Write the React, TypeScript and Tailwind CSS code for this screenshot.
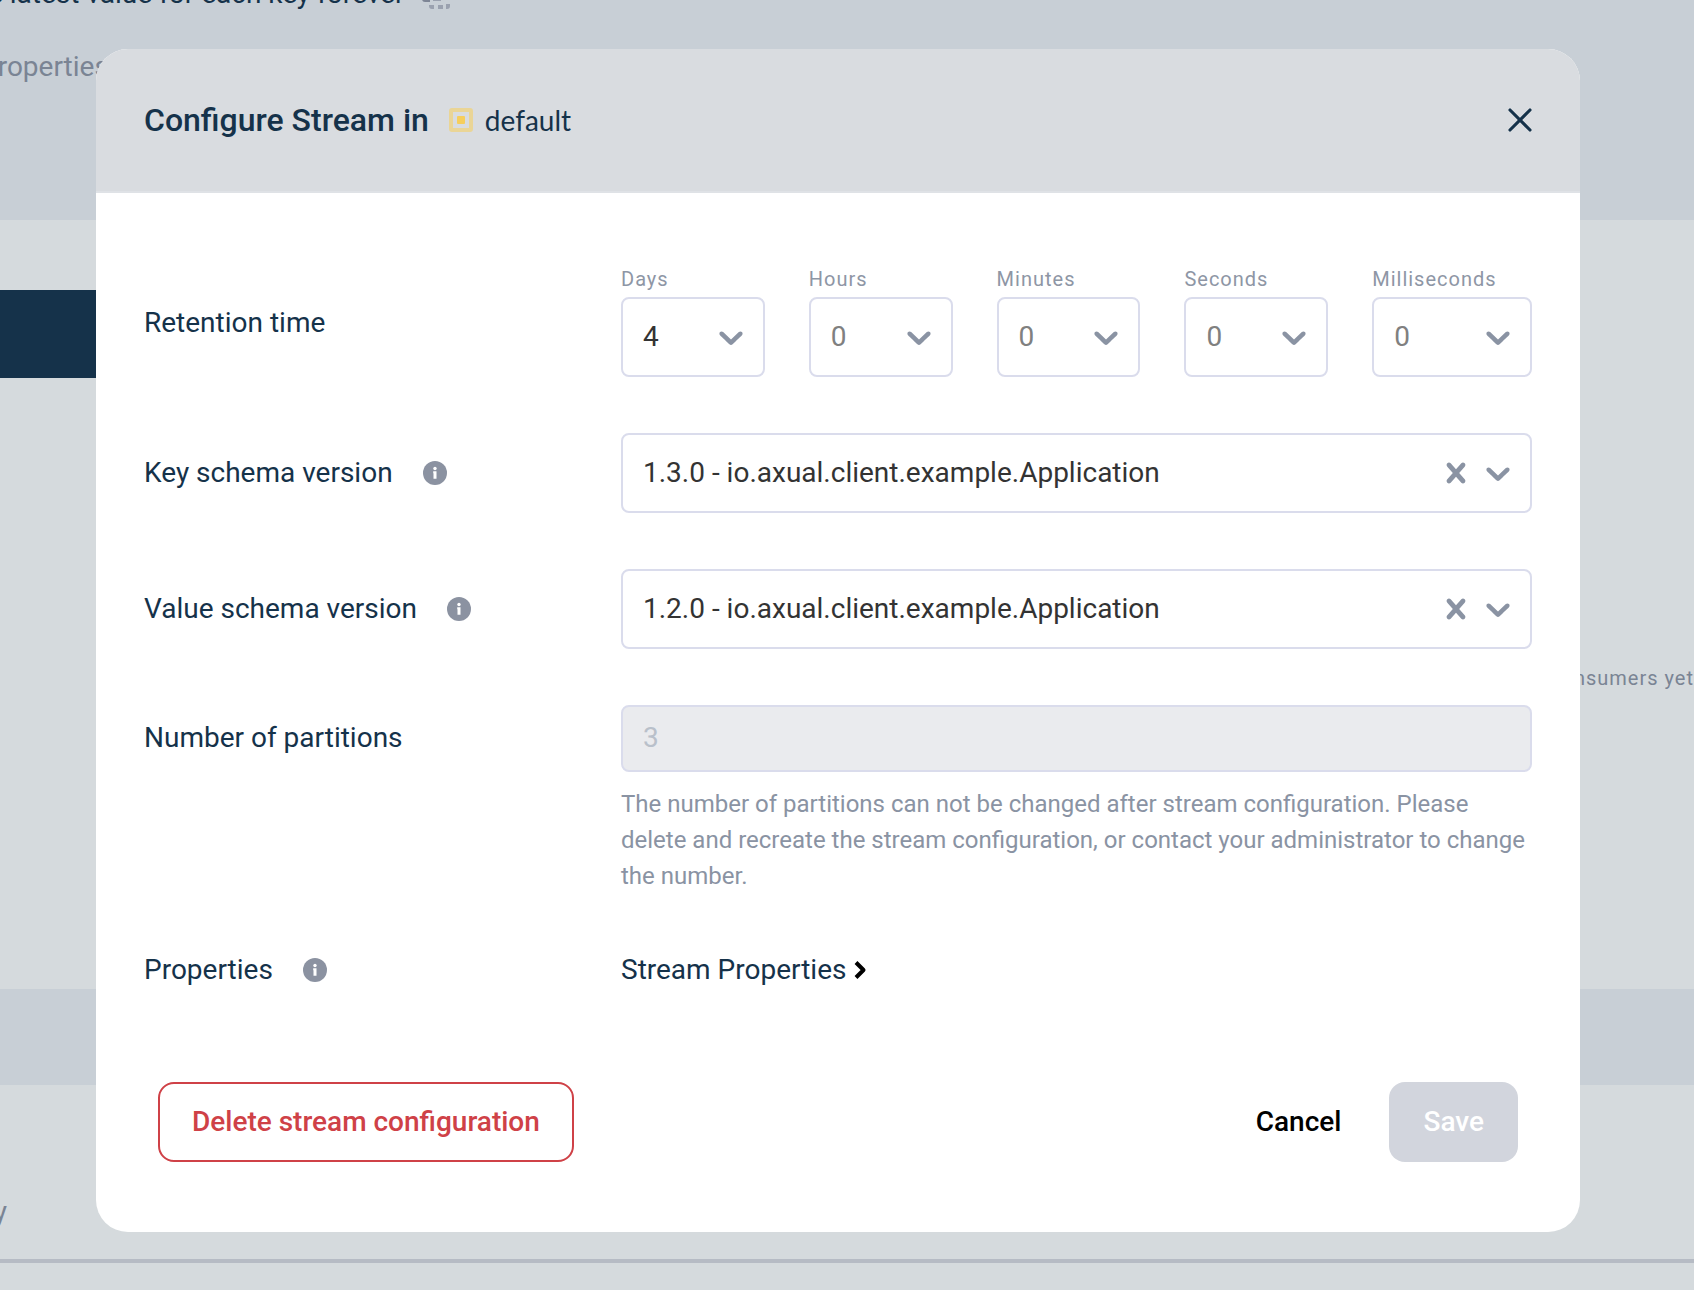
import React from 'react';
import { X } from 'lucide-react';

const CHEVRON =
    'M4.516 7.548c0.436-0.446 1.043-0.481 1.576 0l3.908 3.747 3.908-3.747c0.533-0.481 1.141-0.446 1.574 0 0.436 0.445 0.408 1.197 0 1.615-0.406 0.418-4.695 4.502-4.695 4.502-0.217 0.223-0.502 0.335-0.787 0.335s-0.57-0.112-0.789-0.335c0 0-4.287-4.084-4.695-4.502s-0.436-1.17 0-1.615z';
const CROSS =
    'M14.348 14.849c-0.469 0.469-1.229 0.469-1.697 0l-2.651-3.030-2.651 3.029c-0.469 0.469-1.229 0.469-1.697 0-0.469-0.469-0.469-1.229 0-1.697l2.758-3.15-2.759-3.152c-0.469-0.469-0.469-1.228 0-1.697s1.228-0.469 1.697 0l2.652 3.031 2.651-3.031c0.469-0.469 1.228-0.469 1.697 0s0.469 1.229 0 1.697l-2.758 3.152 2.758 3.15c0.469 0.469 0.469 1.229 0 1.698z';

const Glyph: React.FC<{ path: string }> = ({ path }) => (
    <svg viewBox="0 0 20 20" className="size-10 fill-[#8a93a3]" aria-hidden="true">
        <path d={path} />
    </svg>
);

const InfoButton: React.FC<{ label: string }> = ({ label }) => (
    <button type="button" aria-label={label} className="ml-[30px]">
        <svg viewBox="0 0 24 24" className="size-6">
            <circle cx="12" cy="12" r="12" fill="#8b92a1" />
            <circle cx="12" cy="7.5" r="1.7" fill="#fff" />
            <path d="M10.2 10.2h3.3v7.6h-3v-5.600h-.3z" fill="#fff" />
        </svg>
    </button>
);

const durations = [
    { id: 'days', label: 'Days', value: '4' },
    { id: 'hours', label: 'Hours', value: '0' },
    { id: 'minutes', label: 'Minutes', value: '0' },
    { id: 'seconds', label: 'Seconds', value: '0' },
    { id: 'milliseconds', label: 'Milliseconds', value: '0' },
];

const DurationSelect: React.FC<{ id: string; label: string; value: string }> = ({ id, label, value }) => (
    <div className="flex flex-col">
        <label htmlFor={id} className="text-[20px] leading-6 tracking-wider text-[#8e96a5] mb-1.5">{label}</label>
        <div className="relative">
            <select
                id={id}
                defaultValue={value}
                className={`w-full h-20 appearance-none rounded-lg border-2 border-[#dadcec] bg-white pl-5 pr-14 ${value === '0' ? 'text-[#808080]' : 'text-[#333333]'}`}
            >
                <option value={value}>{value}</option>
            </select>
            <span className="absolute right-3.5 inset-y-0 flex items-center pointer-events-none">
                <Glyph path={CHEVRON} />
            </span>
        </div>
    </div>
);

const SchemaSelect: React.FC<{ id: string; value: string }> = ({ id, value }) => (
    <div className="relative">
        <select
            id={id}
            defaultValue={value}
            className="w-full h-20 appearance-none rounded-lg border-2 border-[#dadcec] bg-white pl-5 pr-28 text-[#333333]"
        >
            <option value={value}>{value}</option>
        </select>
        <span className="absolute right-3.5 inset-y-0 flex items-center gap-0.5 pointer-events-none">
            <button type="button" aria-label="Clear" className="pointer-events-auto"><Glyph path={CROSS} /></button>
            <Glyph path={CHEVRON} />
        </span>
    </div>
);

// the stream page that stays visible around the dialog, scrolled part-way
const Backdrop: React.FC = () => (
    <div className="absolute inset-0 flex flex-col overflow-hidden" aria-hidden="true">
        <div className="h-[220px] shrink-0 bg-[#c8cfd6] whitespace-nowrap">
            <div className="-mt-[22px] -ml-3 flex items-center gap-[18px]">
                <p className="leading-8">e latest value for each key forever</p>
                <svg viewBox="0 0 32 32" className="size-8">
                    <rect x="0" y="4" width="20" height="20" rx="3" fill="#7d8595" />
                    <rect x="8" y="12" width="20" height="20" fill="#c8cfd6" />
                    <path d="M7 27h5v4h-2q-3 0-3-3zM16 27h5v4h-5zM24 26h4v2q0 3-3 3h-1zM11 21h8v2h-8z" fill="#9aa1af" />
                </svg>
            </div>
            <p className="-ml-5 mt-[39px] leading-9 text-[#7a8494]">Properties</p>
        </div>
        <div className="h-[70px] shrink-0" />
        <div className="h-[88px] w-1/4 shrink-0 bg-[#15324a]" />
        <div className="flex h-[611px] shrink-0 justify-end pt-[288px]">
            <p className="text-[20px] leading-6 tracking-wider text-[#7a8494]">No consumers yet</p>
        </div>
        <div className="h-24 shrink-0 bg-[#c8cfd6]" />
        <div className="h-[174px] shrink-0 pt-[111px]">
            <p className="-ml-[82px] leading-8 text-[#7a8494]">History</p>
        </div>
        <div className="h-1 shrink-0 bg-[#b6bbc4]" />
    </div>
);

const rowClass = 'grid grid-cols-[minmax(0,477fr)_minmax(0,911fr)]';

const App: React.FC = () => (
    <div className="relative min-h-screen bg-[#d5dadd] px-24 pt-[49px] pb-[58px] font-['Roboto',sans-serif] text-[28px] text-[#15324a]">
        <Backdrop />
        <div
            role="dialog"
            aria-labelledby="dialog-title"
            className="relative mr-[18px] overflow-hidden rounded-[32px] bg-white"
        >
            <header className="flex h-36 items-center border-b-2 border-[#dfe2e6] bg-[#d9dce0] px-12">
                <h2 id="dialog-title" className="text-[32px] font-medium">Configure Stream in</h2>
                <svg viewBox="0 0 24 24" className="ml-5 size-6" aria-hidden="true">
                    <rect x="2" y="2" width="20" height="20" rx="1" fill="none" stroke="#ead596" strokeWidth="4" />
                    <rect x="8" y="8" width="8" height="8" rx="1" fill="#f6ce5c" />
                </svg>
                <span className="ml-3 font-['Lato',sans-serif]">default</span>
                <button type="button" aria-label="Close" className="-mr-2 ml-auto">
                    <X className="size-10" strokeWidth={1.9} />
                </button>
            </header>

            <form className="flex flex-col px-12 pt-[74px] pb-[70px]">
                <div className={rowClass}>
                    <span className="pt-[38px] leading-9">Retention time</span>
                    <div className="grid grid-cols-[144fr_144fr_144fr_144fr_160fr] gap-11">
                        {durations.map((d) => (
                            <DurationSelect key={d.id} {...d} />
                        ))}
                    </div>
                </div>

                <div className={`${rowClass} mt-14 items-center`}>
                    <div className="flex items-center">
                        <label htmlFor="key-schema">Key schema version</label>
                        <InfoButton label="About key schema version" />
                    </div>
                    <SchemaSelect id="key-schema" value="1.3.0 - io.axual.client.example.Application" />
                </div>

                <div className={`${rowClass} mt-14 items-center`}>
                    <div className="flex items-center">
                        <label htmlFor="value-schema">Value schema version</label>
                        <InfoButton label="About value schema version" />
                    </div>
                    <SchemaSelect id="value-schema" value="1.2.0 - io.axual.client.example.Application" />
                </div>

                <div className={`${rowClass} mt-14`}>
                    <label htmlFor="partitions" className="pt-[15px] leading-9">Number of partitions</label>
                    <div>
                        <input
                            id="partitions"
                            type="text"
                            value="3"
                            disabled
                            className="block h-[67px] w-full rounded-lg border-2 border-[#dadcec] bg-[#eaebee] px-5 pb-0.5 text-[#b9c0ca]"
                        />
                        <p className="mt-3.5 text-[24px] leading-9 text-[#8a93a3]">
                            The number of partitions can not be changed after stream configuration. Please delete and
                            recreate the stream configuration, or contact your administrator to change the number.
                        </p>
                    </div>
                </div>

                <div className={`${rowClass} mt-[58px] items-center leading-9`}>
                    <div className="flex items-center">
                        <span>Properties</span>
                        <InfoButton label="About properties" />
                    </div>
                    <button type="button" className="flex items-center gap-2">
                        Stream Properties
                        <svg viewBox="0 0 14 18" className="h-[18px] w-3.5" fill="none" stroke="#000" strokeWidth="4" strokeLinejoin="round" aria-hidden="true">
                            <path d="M2 1.5 9.500 9 2 16.500" />
                        </svg>
                    </button>
                </div>

                <div className="mt-[94px] flex items-center px-3.5 font-medium">
                    <button type="button" className="h-20 rounded-2xl border-2 border-[#cf4147] px-8 text-[#cf4147]">
                        Delete stream configuration
                    </button>
                    <button type="button" className="ml-auto px-12 text-black">Cancel</button>
                    <button type="submit" disabled className="h-20 rounded-2xl bg-[#d2d5dd] px-[34px] text-white">Save</button>
                </div>
            </form>
        </div>
    </div>
);

export default App;
